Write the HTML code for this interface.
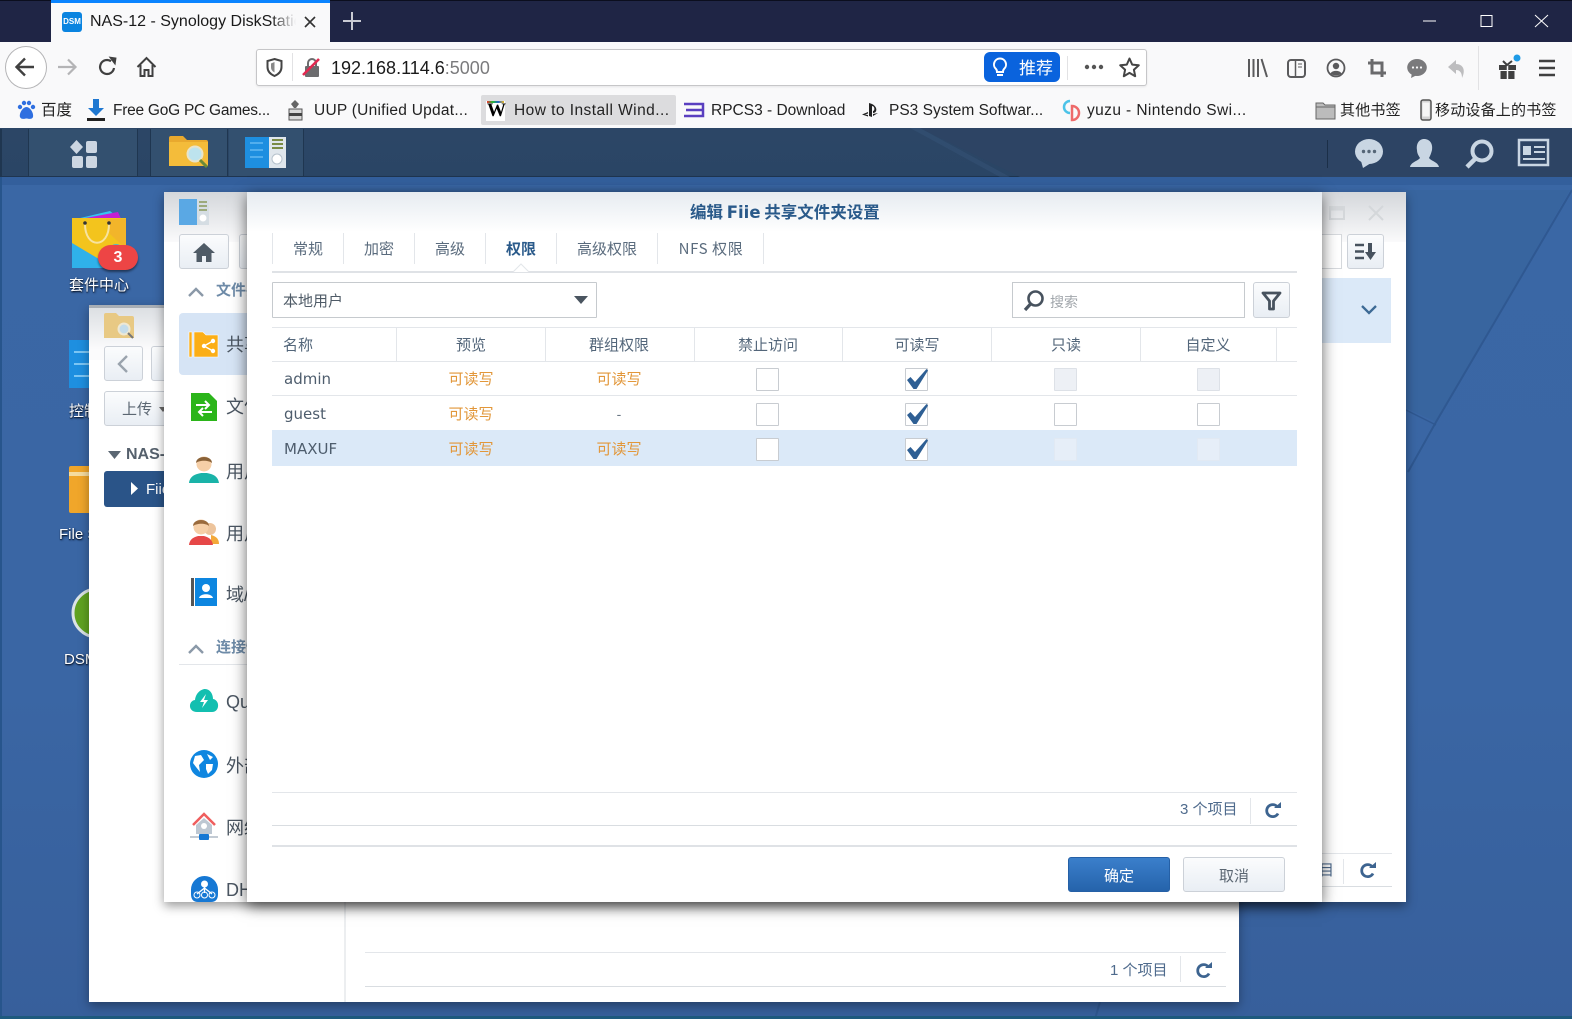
<!DOCTYPE html>
<html lang="zh-CN"><head><meta charset="utf-8"><title>NAS-12 - Synology DiskStation</title>
<style>
html,body{margin:0;padding:0;width:1572px;height:1019px;overflow:hidden;background:#3a67a5}
*{box-sizing:border-box}
body{font-family:"Liberation Sans","Noto Sans CJK SC",sans-serif;position:relative}
.a{position:absolute}
.t{position:absolute;white-space:nowrap;line-height:20px;height:20px}
.c{transform:translateX(-50%)}
.b{font-size:15.5px;color:#222;top:101px}
.tab{font-size:15px;color:#5a6b7d;top:239px;font-family:"Noto Sans CJK SC","Liberation Sans",sans-serif}
.h{font-size:15px;color:#53667a;top:336px}
.or{font-size:15px;color:#e2973a}
.nm{font-size:15px;color:#4e5d6d;font-family:"DejaVu Sans",sans-serif;left:284px}
.cb{position:absolute;width:23px;height:23px;background:#fff;border:1.5px solid #c8ccd1;border-radius:1px}
.dis{background:#edf0f5;border-color:#dde1e7}
.dis2{background:#e6eef8;border-color:#e1e9f3}
.ln{position:absolute;height:1px;background:#e3e6ea}
.sep{position:absolute;width:1px;background:#e3e6ea}
.dt{color:#fff;font-size:15px;text-shadow:1px 1px 2px #0c1c36,0 1px 1px #0c1c36}
.side{font-size:18px;color:#4b5662;left:226px}
.btn{position:absolute;border:1px solid #ccd1d8;border-radius:3px;background:linear-gradient(#fbfcfd,#e9eef4)}
svg{position:absolute;overflow:visible}
</style></head><body>

<!-- desktop background -->
<svg class="a" style="left:0;top:177px" width="1572" height="842" viewBox="0 177 1572 842">
<defs><linearGradient id="dg" x1="0" y1="0" x2="0" y2="1"><stop offset="0" stop-color="#3a67a5"/><stop offset=".6" stop-color="#3a66a4"/><stop offset="1" stop-color="#375f9b"/></linearGradient></defs>
<rect x="0" y="177" width="1572" height="842" fill="url(#dg)"/>
<rect x="0" y="177" width="1572" height="8" fill="#2f5a96" opacity=".6"/>
<polygon points="1406,190 1570,190 1436,422 1406,408" fill="#38659f"/>
<polyline points="1572,190 1436,422 1408,472" fill="none" stroke="#2f5891" stroke-width="2"/>
<polyline points="1406,410 1436,425" fill="none" stroke="#2f5891" stroke-width="1.500"/>
<polyline points="1100,1002 1095,1019" stroke="#2f578f" stroke-width="2" fill="none"/>
<rect x="0" y="177" width="2" height="842" fill="#27558c"/>
<rect x="0" y="1016" width="1572" height="3" fill="#1e5a7e"/>
</svg>

<!-- Firefox chrome -->
<div class="a" style="left:0;top:0;width:1572px;height:42px;background:#1f2545"></div>
<div class="a" style="left:0;top:0;width:1572px;height:1px;background:#0b0e1e"></div>
<div class="a" style="left:51px;top:0;width:279px;height:42px;background:#f9f9fa;border-top:3px solid #0a84ff"></div>
<div class="a" style="left:62px;top:12px;width:20px;height:20px;background:#0a84e0;border-radius:3px;color:#fff;font-size:8px;font-weight:bold;line-height:20px;text-align:center">DSM</div>
<div class="t" style="left:90px;top:12px;font-size:16px;color:#1a1a1a;width:206px;overflow:hidden;-webkit-mask-image:linear-gradient(90deg,#000 88%,transparent)">NAS-12 - Synology DiskStation</div>
<svg style="left:303px;top:15px" width="14" height="14"><path d="M2 2L12 12M12 2L2 12" stroke="#333" stroke-width="1.600"/></svg>
<svg style="left:343px;top:12px" width="18" height="18"><path d="M9 0V18M0 9H18" stroke="#c8cad3" stroke-width="2"/></svg>
<svg style="left:1423px;top:14px" width="140" height="14"><path d="M0 7H13" stroke="#fff" stroke-width="1"/><rect x="58" y="1.500" width="11" height="11" fill="none" stroke="#fff" stroke-width="1"/><path d="M112 1L125 13M125 1L112 13" stroke="#fff" stroke-width="1"/></svg>

<div class="a" style="left:0;top:42px;width:1572px;height:86px;background:#f9f9fa"></div>
<div class="a" style="left:5px;top:46px;width:42px;height:43px;border-radius:50%;border:1px solid #b4b4b6;background:#fff"></div>
<svg style="left:14px;top:56px" width="24" height="22"><path d="M20 11H3M11 2.500L2.500 11L11 19.500" fill="none" stroke="#404040" stroke-width="2.400"/></svg>
<svg style="left:56px;top:57px" width="22" height="20"><path d="M2 10H19M12 2.500L19.500 10L12 17.500" fill="none" stroke="#b4b4b6" stroke-width="2.200"/></svg>
<svg style="left:98px;top:57px" width="20" height="20"><path d="M16 11A7 7 0 1 1 13 4.200" fill="none" stroke="#404040" stroke-width="2.200"/><path d="M10 0H18V8Z" fill="#404040" transform="rotate(8 14 4)"/></svg>
<svg style="left:136px;top:56px" width="21" height="22"><path d="M1.500 11L10.500 2L19.500 11M4.500 9V20H8.500V14H12.500V20H16.500V9" fill="none" stroke="#404040" stroke-width="2"/></svg>

<div class="a" style="left:256px;top:49px;width:891px;height:37px;background:#fff;border:1px solid #c6c6c8;border-radius:3px;box-shadow:0 1px 2px rgba(0,0,0,.08)"></div>
<svg style="left:266px;top:58px" width="17" height="19"><path d="M8.500 1L15.500 3V9C15.500 14 12 16.500 8.500 18C5 16.500 1.500 14 1.500 9V3Z" fill="none" stroke="#444" stroke-width="2"/><path d="M8.500 4V14.500C6 13 5 11.500 5 9V5.500Z" fill="#888"/></svg>
<div class="a" style="left:292px;top:53px;width:1px;height:28px;background:#e2e2e4"></div>
<svg style="left:302px;top:57px" width="20" height="21"><rect x="3" y="9" width="14" height="11" rx="1" fill="#6c6c6e"/><path d="M6 9V6A4 4 0 0 1 14 6V9" fill="none" stroke="#6c6c6e" stroke-width="2"/><path d="M1 18L17 2" stroke="#e22850" stroke-width="2.600"/></svg>
<div class="t" style="left:331px;top:58px;font-size:18px;color:#1a1a1a">192.168.114.6<span style="color:#7b7b7d">:5000</span></div>
<div class="a" style="left:984px;top:52px;width:76px;height:30px;background:#0a63dd;border-radius:6px"></div>
<svg style="left:992px;top:57px" width="16" height="21"><path d="M8 1.500A6 6 0 0 1 12 12C11 13 11 14 11 15H5C5 14 5 13 4 12A6 6 0 0 1 8 1.500ZM5 18H11" fill="none" stroke="#fff" stroke-width="2"/></svg>
<div class="t" style="left:1019px;top:59px;font-size:17px;color:#fff">推荐</div>
<div class="a" style="left:1067px;top:56px;width:1px;height:24px;background:#e2e2e4"></div>
<svg style="left:1084px;top:64px" width="20" height="6"><circle cx="3" cy="3" r="2.200" fill="#555"/><circle cx="10" cy="3" r="2.200" fill="#555"/><circle cx="17" cy="3" r="2.200" fill="#555"/></svg>
<svg style="left:1119px;top:57px" width="21" height="21"><path d="M10.500 1.500L13.200 7.600L19.800 8.300L14.900 12.700L16.200 19.200L10.500 15.900L4.800 19.200L6.100 12.700L1.200 8.300L7.800 7.600Z" fill="none" stroke="#444" stroke-width="2" stroke-linejoin="round"/></svg>

<!-- toolbar right -->
<svg style="left:1247px;top:57px" width="320" height="24">
<path d="M2 2V20M6.500 2V20M11 2V20M14.500 2L20 20" stroke="#5a5a5c" stroke-width="2" fill="none"/>
<g transform="translate(40,2)"><rect x="1" y="1" width="17" height="17" rx="3" fill="none" stroke="#5a5a5c" stroke-width="2"/><path d="M8.500 1V18" stroke="#5a5a5c" stroke-width="1.500"/><path d="M11 5H15M11 8H15" stroke="#5a5a5c" stroke-width="1"/></g>
<g transform="translate(80,1)"><circle cx="9" cy="10" r="8.500" fill="none" stroke="#5a5a5c" stroke-width="1.800"/><circle cx="9" cy="8" r="3.200" fill="#5a5a5c"/><path d="M3.500 15.500C5 12 13 12 14.500 15.500C12 18 6 18 3.500 15.500Z" fill="#5a5a5c"/></g>
<g transform="translate(120,1)" stroke="#6a6a6c" stroke-width="3" fill="none"><path d="M5 1V15H19M1 5H15V19"/></g>
<g transform="translate(160,2)"><ellipse cx="10" cy="8.500" rx="9.800" ry="8.500" fill="#7a7a7c"/><path d="M5 14L4 19L10 16Z" fill="#7a7a7c"/><circle cx="6" cy="8.500" r="1.100" fill="#f9f9fa"/><circle cx="10" cy="8.500" r="1.100" fill="#f9f9fa"/><circle cx="14" cy="8.500" r="1.100" fill="#f9f9fa"/></g>
<g transform="translate(200,2)"><path d="M1 8L9 1V5C16 5 19 11 15 19C15 14 13 11 9 11V15Z" fill="#bdbdbf"/></g>
<rect x="231" y="-11" width="1" height="44" fill="#e2e2e4"/>
<g transform="translate(251,2)"><rect x="1" y="6" width="17" height="5" fill="#404040"/><rect x="2.500" y="12" width="14" height="8" fill="#404040"/><path d="M9.500 6V20" stroke="#f9f9fa" stroke-width="1.500"/><path d="M5 2L9 6L14 2" fill="none" stroke="#404040" stroke-width="2"/><circle cx="19" cy="-1" r="3.500" fill="#1e9be6"/></g>
<path d="M292 4H308M292 11H308M292 18H308" stroke="#404040" stroke-width="2.400"/>
</svg>

<!-- bookmarks -->
<div class="a" style="left:481px;top:95px;width:195px;height:30px;background:#dcdcde;border-radius:2px"></div>
<svg style="left:16px;top:100px" width="20" height="20"><g fill="#2f6fe0"><circle cx="4" cy="7" r="2.200"/><circle cx="8" cy="3" r="2.200"/><circle cx="13" cy="3" r="2.200"/><circle cx="17" cy="7" r="2.200"/><path d="M10.500 7C14 7 18 13 17 17C16 20 12 18.500 10.500 18.500C9 18.500 5 20 4 17C3 13 7 7 10.500 7Z"/></g></svg>
<div class="t b" style="left:41px">百度</div>
<svg style="left:87px;top:98px" width="18" height="24"><path d="M6 1H12V10H17L9 18L1 10H6Z" fill="#1f78d1"/><rect x="0" y="20" width="18" height="3" fill="#222"/></svg>
<div class="t b" style="left:113px;letter-spacing:-.25px">Free GoG PC Games...</div>
<svg style="left:288px;top:99px" width="15" height="22"><path d="M7 1L11 5L8 9H6L3 5Z" fill="#666"/><rect x="1" y="10" width="13" height="11" fill="#dadada" stroke="#555"/><rect x="1" y="14" width="13" height="3" fill="#444"/></svg>
<div class="t b" style="left:314px;letter-spacing:.25px">UUP (Unified Updat...</div>
<div class="a" style="left:486px;top:101px;width:19px;height:20px;background:#fff"></div>
<div class="t" style="left:487px;top:100px;font:bold 19px 'Liberation Serif',serif;color:#000;line-height:22px;height:22px">W</div>
<div class="a" style="left:487px;top:101px;width:17px;height:2px;background:linear-gradient(90deg,#e33,#2b3,#26c,#eb2)"></div>
<div class="t b" style="left:514px;letter-spacing:.45px">How to Install Wind...</div>
<svg style="left:684px;top:102px" width="20" height="16"><path d="M0 2H19V14H0M2 8H18" fill="none" stroke="#5a3fc0" stroke-width="2.500"/></svg>
<div class="t b" style="left:711px">RPCS3 - Download</div>
<svg style="left:862px;top:102px" width="18" height="16"><path d="M7 1V14L10 15V4C13 4 13 9 11 9V11C16 11 16 3 7 1ZM6 10L0 12.500L6 14.500V13L3 12.500L6 11.500ZM11 12L16 11L11 14Z" fill="#222"/></svg>
<div class="t b" style="left:889px">PS3 System Softwar...</div>
<svg style="left:1061px;top:99px" width="21" height="22"><path d="M9 2A6 6 0 0 0 9 14" fill="none" stroke="#4cc3e8" stroke-width="2.500"/><path d="M11 7A7 7 0 0 1 11 21Z" fill="none" stroke="#ee6a6a" stroke-width="2.500"/></svg>
<div class="t b" style="left:1087px;letter-spacing:.4px">yuzu - Nintendo Swi...</div>
<svg style="left:1315px;top:100px" width="21" height="20"><path d="M1 3H8L10 5H20V19H1Z" fill="#bcbcbc" stroke="#666"/><path d="M1 7H20" stroke="#666"/></svg>
<div class="t b" style="left:1340px;font-size:15px;letter-spacing:.2px">其他书签</div>
<svg style="left:1420px;top:99px" width="12" height="22"><rect x="1" y="1" width="10" height="20" rx="2" fill="#d3d3d3" stroke="#555" stroke-width="1.500"/><rect x="2.500" y="3.500" width="7" height="14" fill="#f5f5f5"/></svg>
<div class="t b" style="left:1435px;font-size:15px;letter-spacing:.2px">移动设备上的书签</div>

<!-- taskbar -->
<div class="a" style="left:0;top:128px;width:1572px;height:49px;background:linear-gradient(#2c4666,#2a4565);border-bottom:1px solid #1f3550"></div>
<svg class="a" style="left:0;top:128px" width="1572" height="49"><polygon points="920,0 1572,0 1572,49 1020,49" fill="#2d4464"/><polygon points="920,0 1010,49 1000,49 910,0" fill="#3a577c" opacity=".4"/></svg>
<div class="a" style="left:0;top:129px;width:2px;height:47px;background:#1f3650"></div>
<div class="a" style="left:28px;top:129px;width:110px;height:47px;background:#33506f;border-left:1px solid #1f3650;border-right:1px solid #1f3650"></div>
<div class="a" style="left:150px;top:129px;width:78px;height:47px;background:#33506f;border-left:1px solid #1f3650;border-right:1px solid #1f3650"></div>
<div class="a" style="left:229px;top:129px;width:75px;height:47px;background:#33506f;border-right:1px solid #1f3650"></div>
<svg style="left:69px;top:140px" width="30" height="28" fill="#ccd6e2"><path d="M7.500 0L14 7L7.500 14L1 7Z"/><rect x="17" y="1" width="11" height="12" rx="2"/><rect x="3" y="16" width="11" height="12" rx="2"/><rect x="17" y="16" width="11" height="12" rx="2"/></svg>
<svg style="left:168px;top:135px" width="42" height="34"><path d="M1 3Q1 1 3 1H15L19 5H38Q40 5 40 7V31H1Z" fill="#e9a92e"/><rect x="1" y="7" width="39" height="24" fill="#f4bc3a"/><circle cx="27" cy="19" r="7.500" fill="#bde3ee" stroke="#e9e4c9" stroke-width="2"/><path d="M32 25L39 32" stroke="#6b8a39" stroke-width="3"/></svg>
<svg style="left:245px;top:137px" width="42" height="32"><rect width="24" height="31" x="0" y="0" fill="#1e8fe0"/><rect x="24" y="0" width="17" height="31" fill="#dfe6ec"/><path d="M27 3H38M27 7H38M27 11H38" stroke="#7a8b45" stroke-width="2"/><circle cx="32" cy="22" r="5" fill="#fff" stroke="#b6c2cc"/><path d="M5 6H18M5 13H18M5 20H18" stroke="#63b9f1" stroke-width="1.500"/></svg>
<div class="a" style="left:1327px;top:140px;width:1px;height:28px;background:#1b2f48"></div>
<svg style="left:1355px;top:139px" width="200" height="30" fill="#c9d6e3">
<ellipse cx="14" cy="12.500" rx="14" ry="12.500"/><path d="M6 22L8 29L16 24Z"/>
<circle cx="8.500" cy="12.500" r="1.700" fill="#567"/><circle cx="14" cy="12.500" r="1.700" fill="#567"/><circle cx="19.500" cy="12.500" r="1.700" fill="#567"/>
<path d="M69 0C75 0 78 5 77 11C76 15 75 17 74 19C76 22 83 23 84 28H55C56 23 63 22 65 19C64 17 62 15 62 11C61 5 64 0 69 0Z"/>
<circle cx="127" cy="12" r="9.500" fill="none" stroke="#c9d6e3" stroke-width="4"/><path d="M120 20L112 28" stroke="#c9d6e3" stroke-width="4.500"/>
<rect x="164" y="1" width="29" height="25" fill="none" stroke="#c9d6e3" stroke-width="2.500"/><rect x="168" y="7" width="8" height="9"/><path d="M179 8H190M179 13H190M168 20H190" stroke="#c9d6e3" stroke-width="2"/>
</svg>

<!-- desktop icons -->
<svg style="left:70px;top:209px" width="72" height="66">
<path d="M6 10L40 2L50 10Z" fill="#35c4f0"/><path d="M10 10L48 3L52 12Z" fill="#c41fd4"/>
<rect x="2" y="9" width="54" height="50" fill="#f3c41d"/><path d="M2 34L44 59H2Z" fill="#2fb1ea"/><path d="M36 10H56V40L40 25Z" fill="#f2b52a"/>
<path d="M15 15C15 40 39 40 39 15" fill="none" stroke="#f7e3a0" stroke-width="2"/><circle cx="15" cy="14" r="1.800" fill="#333"/><circle cx="39" cy="14" r="1.800" fill="#333"/>
<circle cx="46" cy="42" r="7" fill="#4fb6cf"/>
<rect x="28" y="36" width="40" height="25" rx="12.500" fill="#ed4545" style="filter:drop-shadow(0 2px 1px rgba(0,0,0,.45))"/>
</svg>
<div class="t" style="left:108px;top:248px;font-size:16px;font-weight:bold;color:#fff;width:20px;text-align:center">3</div>
<div class="t dt" style="left:69px;top:276px">套件中心</div>
<svg style="left:69px;top:340px" width="30" height="50"><rect width="30" height="48" fill="#1e8fe0"/><path d="M5 12H20M5 24H20M5 36H20" stroke="#7cc6f4" stroke-width="2"/></svg>
<div class="t dt" style="left:69px;top:402px">控制面板</div>
<svg style="left:69px;top:465px" width="30" height="48"><rect width="30" height="47" y="1" rx="2" fill="#f0a62a"/><rect y="7" width="30" height="4" fill="#f5dca0"/></svg>
<div class="t dt" style="left:59px;top:525px">File Station</div>
<svg style="left:71px;top:588px" width="30" height="52"><circle cx="26" cy="25" r="24" fill="#5fa221" stroke="#dbe3e6" stroke-width="3"/></svg>
<div class="t dt" style="left:64px;top:650px">DSM 帮助</div>

<!-- file station window -->
<div class="a" style="left:89px;top:305px;width:1150px;height:697px;background:#fff;box-shadow:0 4px 10px rgba(0,0,0,.35);overflow:hidden">
 <div class="a" style="left:0;top:0;width:100%;height:55px;background:linear-gradient(#dcdfe3,#fbfbfc 80%);border-top:3px solid #a8aeb5"></div>
</div>
<svg style="left:104px;top:312px" width="31" height="28"><path d="M0 3Q0 1 2 1H12L15 4H28Q30 4 30 6V26H0Z" fill="#e8c984"/><circle cx="20" cy="17" r="5.500" fill="#c4dcea" stroke="#efe8d2" stroke-width="2"/><path d="M24 21L29 26" stroke="#777" stroke-width="2"/></svg>
<div class="btn" style="left:104px;top:346px;width:39px;height:35px"></div>
<svg style="left:117px;top:355px" width="12" height="18"><path d="M10 1L2 9L10 17" fill="none" stroke="#9aa3ad" stroke-width="2.400"/></svg>
<div class="btn" style="left:151px;top:346px;width:30px;height:35px"></div>
<div class="btn" style="left:104px;top:391px;width:80px;height:35px"></div>
<div class="t" style="left:122px;top:400px;font-size:15px;color:#5b6672">上传</div>
<svg style="left:159px;top:407px" width="8" height="5"><path d="M0 0H8L4 5Z" fill="#666"/></svg>
<svg style="left:108px;top:451px" width="13" height="8"><path d="M0 0H13L6.500 8Z" fill="#5a6672"/></svg>
<div class="t" style="left:126px;top:445px;font-size:16px;font-weight:bold;color:#55606c">NAS-12</div>
<div class="a" style="left:104px;top:471px;width:80px;height:36px;background:#2a5488;border-radius:3px"></div>
<svg style="left:131px;top:482px" width="7" height="13"><path d="M0 0L7 6.500L0 13Z" fill="#fff"/></svg>
<div class="t" style="left:146px;top:480px;font-size:15px;color:#fff">Fiie</div>
<div class="a" style="left:344px;top:885px;width:2px;height:117px;background:#eceef0"></div>
<div class="ln" style="left:365px;top:952px;width:861px"></div>
<div class="ln" style="left:365px;top:986px;width:861px;background:#d9dde1"></div>
<div class="t" style="left:1110px;top:961px;font-size:15px;color:#4f6b8d">1 个项目</div>
<div class="sep" style="left:1180px;top:956px;height:26px"></div>

<!-- control panel window -->
<div class="a" style="left:164px;top:192px;width:1242px;height:710px;background:#fff;box-shadow:0 4px 10px rgba(0,0,0,.4);overflow:hidden">
 <div class="a" style="left:0;top:0;width:100%;height:50px;background:linear-gradient(#d4d7db,#fafafb)"></div>
</div>
<svg style="left:179px;top:199px" width="31" height="28"><rect width="18" height="26" fill="#5aa8e4"/><rect x="18" width="12" height="26" fill="#d5dde3"/><path d="M20 3H28M20 7H28M20 11H28" stroke="#8a9a5a" stroke-width="1.500"/><circle cx="24" cy="19" r="3.500" fill="#fff"/></svg>
<div class="btn" style="left:179px;top:234px;width:50px;height:35px"></div>
<svg style="left:193px;top:243px" width="22" height="19"><path d="M11 0L22 10H18.500V19H13V13H9V19H3.500V10H0Z" fill="#4f5b66"/></svg>
<div class="btn" style="left:239px;top:234px;width:20px;height:35px"></div>
<svg style="left:188px;top:287px" width="16" height="10"><path d="M1 9L8 2L15 9" fill="none" stroke="#8b99a8" stroke-width="2.400"/></svg>
<div class="t" style="left:216px;top:281px;font-size:15px;font-weight:bold;color:#6e8ba8">文件共享</div>
<div class="a" style="left:179px;top:313px;width:80px;height:62px;background:#d6e4f5;border-radius:4px"></div>
<svg style="left:189px;top:331px" width="30" height="27"><path d="M0 1H3V26H0ZM5 1H14L17 4H29V26H5Z" fill="#fbae17" stroke="#fff" stroke-width=".6"/><circle cx="15" cy="15" r="2.200" fill="#fff"/><circle cx="24" cy="10" r="2.200" fill="#fff"/><circle cx="24" cy="20" r="2.200" fill="#fff"/><path d="M15 15L24 10M15 15L24 20" stroke="#fff" stroke-width="1.300"/></svg>
<div class="t side" style="top:335px">共享</div>
<svg style="left:191px;top:393px" width="26" height="28"><path d="M0 0H18L26 8V28H0Z" fill="#2bb51a"/><path d="M5 12H18M14 8L18 12L14 16M21 19H8M12 15L8 19L12 23" fill="none" stroke="#fff" stroke-width="2"/></svg>
<div class="t side" style="top:397px">文件</div>
<svg style="left:189px;top:455px" width="30" height="28"><circle cx="15" cy="9" r="7.500" fill="#f6cfa7"/><path d="M7 8C7 0 23 0 23 8C20 5 10 5 7 8Z" fill="#8a6238"/><path d="M0 28C1 20 8 19 12 18H18C22 19 29 20 30 28Z" fill="#1ab3a8"/></svg>
<div class="t side" style="top:462px">用户</div>
<svg style="left:189px;top:518px" width="30" height="28"><circle cx="21" cy="11" r="6" fill="#edc49c"/><path d="M22 17C26 18 30 20 30 26H22Z" fill="#f3a93a"/><circle cx="12" cy="9" r="7.500" fill="#f6cfa7"/><path d="M4 8C4 0 20 0 20 8C17 5 8 5 4 8Z" fill="#9a6a3c"/><path d="M0 27C1 20 6 19 9 18H15C18 19 23 20 24 27Z" fill="#e64848"/></svg>
<div class="t side" style="top:524px">用户</div>
<svg style="left:191px;top:578px" width="26" height="28"><rect width="3" height="28" fill="#555"/><rect x="4" width="22" height="28" fill="#0d86e0"/><circle cx="15" cy="10" r="4" fill="#fff"/><path d="M8 20C9 15 21 15 22 20Z" fill="#fff"/></svg>
<div class="t side" style="top:585px">域/LDAP</div>
<svg style="left:188px;top:644px" width="16" height="10"><path d="M1 9L8 2L15 9" fill="none" stroke="#8b99a8" stroke-width="2.400"/></svg>
<div class="t" style="left:216px;top:638px;font-size:15px;font-weight:bold;color:#6e8ba8">连接性</div>
<div class="ln" style="left:179px;top:664px;width:80px"></div>
<svg style="left:190px;top:689px" width="28" height="24"><path d="M7 23C-2 23 -2 12 5 11C6 3 12 0 15 0C20 0 23 5 23 10C30 11 30 23 22 23Z" fill="#13bfb0"/><path d="M16 5L10 13H14L12 19L18 11H14Z" fill="#fff"/></svg>
<div class="t side" style="top:692px">QuickConnect</div>
<svg style="left:190px;top:750px" width="28" height="28"><circle cx="14" cy="14" r="14" fill="#0f86e0"/><path d="M5 6L11 5L14 10L9 15L10 22L6 17L3 13ZM17 4L23 7L20 10ZM16 14H23L22 20L18 24L16 19Z" fill="#fff"/></svg>
<div class="t side" style="top:756px">外部访问</div>
<svg style="left:190px;top:812px" width="28" height="29"><path d="M3 13L14 2L25 13" fill="none" stroke="#ef5e5e" stroke-width="2.500"/><path d="M6 13L14 6L22 13V22H6Z" fill="#bdc7d2"/><circle cx="14" cy="14" r="3" fill="#fff"/><path d="M0 25H28" stroke="#c3cbd4" stroke-width="2"/><rect x="9" y="22" width="10" height="6" rx="1" fill="#1678d4"/></svg>
<div class="t side" style="top:818px">网络</div>
<svg style="left:191px;top:876px" width="27" height="26"><path d="M13.500 0A13.500 13.500 0 0 1 27 13.500V18Q27 26 20 26H7Q0 26 0 18V13.500A13.500 13.500 0 0 1 13.500 0Z" fill="#1678d4"/><circle cx="13.500" cy="8" r="3.500" fill="#fff"/><path d="M13.500 11V17M13.500 12L6 18M13.500 12L21 18" stroke="#fff" stroke-width="1.300"/><circle cx="6" cy="19" r="3" fill="none" stroke="#fff"/><circle cx="13.500" cy="19" r="3" fill="none" stroke="#fff"/><circle cx="21" cy="19" r="3" fill="none" stroke="#fff"/></svg>
<div class="t side" style="top:880px">DHCP</div>
<div class="a" style="left:1322px;top:234px;width:20px;height:35px;background:#fff;border:1px solid #d6d9dd;border-left:0"></div>
<svg style="left:1329px;top:205px" width="60" height="16"><rect x="1" y="2" width="14" height="12" fill="none" stroke="#d4d7da" stroke-width="2"/><path d="M1 4H15" stroke="#d4d7da" stroke-width="3"/><path d="M40 1L54 15M54 1L40 15" stroke="#d4d7da" stroke-width="2"/></svg>
<div class="btn" style="left:1347px;top:234px;width:37px;height:35px"></div>
<svg style="left:1355px;top:243px" width="22" height="18"><path d="M0 2H9M0 8.500H9M0 15H9" stroke="#47525e" stroke-width="2.600"/><path d="M15 0V10" stroke="#47525e" stroke-width="4"/><path d="M10 9H21L15.500 17Z" fill="#47525e"/></svg>
<div class="a" style="left:1322px;top:278px;width:69px;height:65px;background:#dbe9f8"></div>
<svg style="left:1361px;top:305px" width="16" height="10"><path d="M1 1L8 8L15 1" fill="none" stroke="#3d6a95" stroke-width="2.300"/></svg>
<div class="ln" style="left:1322px;top:853px;width:70px"></div>
<div class="ln" style="left:1322px;top:886px;width:70px;background:#d9dde1"></div>
<div class="t" style="left:1319px;top:861px;font-size:15px;color:#4f6b8d">目</div>
<div class="sep" style="left:1343px;top:859px;height:25px"></div>

<!-- dialog -->
<div class="a" style="left:247px;top:192px;width:1075px;height:710px;background:#fff;box-shadow:0 4px 14px rgba(0,0,0,.6)">
 <div class="a" style="left:0;top:0;width:100%;height:40px;background:linear-gradient(#e6ebf0,#fff)"></div>
</div>
<div class="t" style="left:690px;top:201px;font-size:16.500px;font-weight:bold;color:#2a5a8a;font-family:'Noto Sans CJK SC','DejaVu Sans',sans-serif">编辑 <span style="font-family:'DejaVu Sans'">Fiie</span> 共享文件夹设置</div>

<!-- tabs -->
<div class="sep" style="left:272px;top:233px;height:31px"></div>
<div class="sep" style="left:343px;top:233px;height:31px"></div>
<div class="sep" style="left:414px;top:233px;height:31px"></div>
<div class="sep" style="left:485px;top:233px;height:31px"></div>
<div class="sep" style="left:556px;top:233px;height:31px"></div>
<div class="sep" style="left:657px;top:233px;height:31px"></div>
<div class="sep" style="left:763px;top:233px;height:31px"></div>
<div class="t tab c" style="left:308px">常规</div>
<div class="t tab c" style="left:379px">加密</div>
<div class="t tab c" style="left:450px">高级</div>
<div class="t tab c" style="left:521px;color:#2a5a8a;font-weight:bold">权限</div>
<div class="t tab c" style="left:607px">高级权限</div>
<div class="t tab c" style="left:711px;letter-spacing:.6px">NFS 权限</div>
<div class="a" style="left:272px;top:271px;width:1025px;height:2px;background:#dfe2e6"></div>
<svg style="left:513px;top:264px" width="16" height="8"><path d="M0 8L8 0L16 8" fill="#fff" stroke="#e3e6ea"/></svg>

<!-- select & search -->
<div class="a" style="left:272px;top:282px;width:325px;height:36px;border:1px solid #c6cace;border-radius:1px;background:#fff"></div>
<div class="t" style="left:283px;top:292px;font-size:15px;color:#4f5b67">本地用户</div>
<svg style="left:574px;top:296px" width="14" height="9"><path d="M0 0H14L7 8Z" fill="#4a5560"/></svg>
<div class="a" style="left:1012px;top:282px;width:233px;height:36px;border:1px solid #c6cace;background:#fff"></div>
<svg style="left:1023px;top:290px" width="22" height="22"><circle cx="12.500" cy="8.500" r="7" fill="none" stroke="#47525e" stroke-width="2.600"/><path d="M7.500 14L2 20" stroke="#47525e" stroke-width="3.200"/></svg>
<div class="t" style="left:1050px;top:292px;font-size:14px;color:#a2a7ac">搜索</div>
<div class="btn" style="left:1253px;top:282px;width:37px;height:36px"></div>
<svg style="left:1261px;top:291px" width="21" height="20"><path d="M2 2H19L12.500 10V18H8.500V10Z" fill="none" stroke="#47525e" stroke-width="2.800" stroke-linejoin="round"/></svg>

<!-- table -->
<div class="ln" style="left:272px;top:327px;width:1025px"></div>
<div class="ln" style="left:272px;top:361px;width:1025px"></div>
<div class="ln" style="left:272px;top:395px;width:1025px"></div>
<div class="a" style="left:272px;top:430px;width:1025px;height:36px;background:#dbe9f8"></div>
<div class="sep" style="left:396px;top:327px;height:34px"></div>
<div class="sep" style="left:545px;top:327px;height:34px"></div>
<div class="sep" style="left:694px;top:327px;height:34px"></div>
<div class="sep" style="left:842px;top:327px;height:34px"></div>
<div class="sep" style="left:991px;top:327px;height:34px"></div>
<div class="sep" style="left:1140px;top:327px;height:34px"></div>
<div class="sep" style="left:1276px;top:327px;height:34px"></div>
<div class="t h" style="left:283px">名称</div>
<div class="t h c" style="left:471px">预览</div>
<div class="t h c" style="left:619px">群组权限</div>
<div class="t h c" style="left:768px">禁止访问</div>
<div class="t h c" style="left:917px">可读写</div>
<div class="t h c" style="left:1066px">只读</div>
<div class="t h c" style="left:1208px">自定义</div>

<div class="t nm" style="top:369px">admin</div>
<div class="t nm" style="top:404px">guest</div>
<div class="t nm" style="top:439px">MAXUF</div>
<div class="t or c" style="left:471px;top:370px">可读写</div>
<div class="t or c" style="left:619px;top:370px">可读写</div>
<div class="t or c" style="left:471px;top:405px">可读写</div>
<div class="t c" style="left:619px;top:404px;font-size:14px;color:#6a7785">-</div>
<div class="t or c" style="left:471px;top:440px">可读写</div>
<div class="t or c" style="left:619px;top:440px">可读写</div>

<div class="cb" style="left:756px;top:368px"></div>
<div class="cb" style="left:756px;top:403px"></div>
<div class="cb" style="left:756px;top:438px"></div>
<div class="cb" style="left:905px;top:368px"></div>
<div class="cb" style="left:905px;top:403px"></div>
<div class="cb" style="left:905px;top:438px"></div>
<svg style="left:907px;top:369px" width="24" height="22"><path d="M0 11L3.500 8L8 13L19.500 0L21 1.500L9.500 20H6.500Z" fill="#2e5f94"/></svg>
<svg style="left:907px;top:404px" width="24" height="22"><path d="M0 11L3.500 8L8 13L19.500 0L21 1.500L9.500 20H6.500Z" fill="#2e5f94"/></svg>
<svg style="left:907px;top:439px" width="24" height="22"><path d="M0 11L3.500 8L8 13L19.500 0L21 1.500L9.500 20H6.500Z" fill="#2e5f94"/></svg>
<div class="cb dis" style="left:1054px;top:368px"></div>
<div class="cb dis" style="left:1197px;top:368px"></div>
<div class="cb" style="left:1054px;top:403px"></div>
<div class="cb" style="left:1197px;top:403px"></div>
<div class="cb dis2" style="left:1054px;top:438px"></div>
<div class="cb dis2" style="left:1197px;top:438px"></div>

<!-- dialog footer -->
<div class="ln" style="left:272px;top:792px;width:1025px"></div>
<div class="ln" style="left:272px;top:825px;width:1025px;background:#d9dde1"></div>
<div class="a" style="left:272px;top:845px;width:1025px;height:2px;background:#dfe2e6"></div>
<div class="t" style="left:1180px;top:800px;font-size:15px;color:#4f6b8d">3 个项目</div>
<div class="sep" style="left:1250px;top:798px;height:26px"></div>
<svg style="left:1265px;top:802px" width="16" height="17"><path d="M13 11.500A6 6 0 1 1 12.500 5" fill="none" stroke="#3d6490" stroke-width="2.800"/><path d="M9 6H16V0Z" fill="#3d6490"/></svg>
<svg style="left:1360px;top:862px" width="16" height="17"><path d="M13 11.500A6 6 0 1 1 12.500 5" fill="none" stroke="#3d6490" stroke-width="2.800"/><path d="M9 6H16V0Z" fill="#3d6490"/></svg>
<svg style="left:1196px;top:962px" width="16" height="17"><path d="M13 11.500A6 6 0 1 1 12.500 5" fill="none" stroke="#3d6490" stroke-width="2.800"/><path d="M9 6H16V0Z" fill="#3d6490"/></svg>
<div class="a" style="left:1068px;top:857px;width:102px;height:35px;border-radius:3px;background:linear-gradient(#3b7fcb,#2563ab);border:1px solid #2560a6"></div>
<div class="t c" style="left:1119px;top:867px;font-size:15px;color:#fff">确定</div>
<div class="btn" style="left:1183px;top:857px;width:102px;height:35px"></div>
<div class="t c" style="left:1234px;top:867px;font-size:15px;color:#5b6672">取消</div>
</body></html>
